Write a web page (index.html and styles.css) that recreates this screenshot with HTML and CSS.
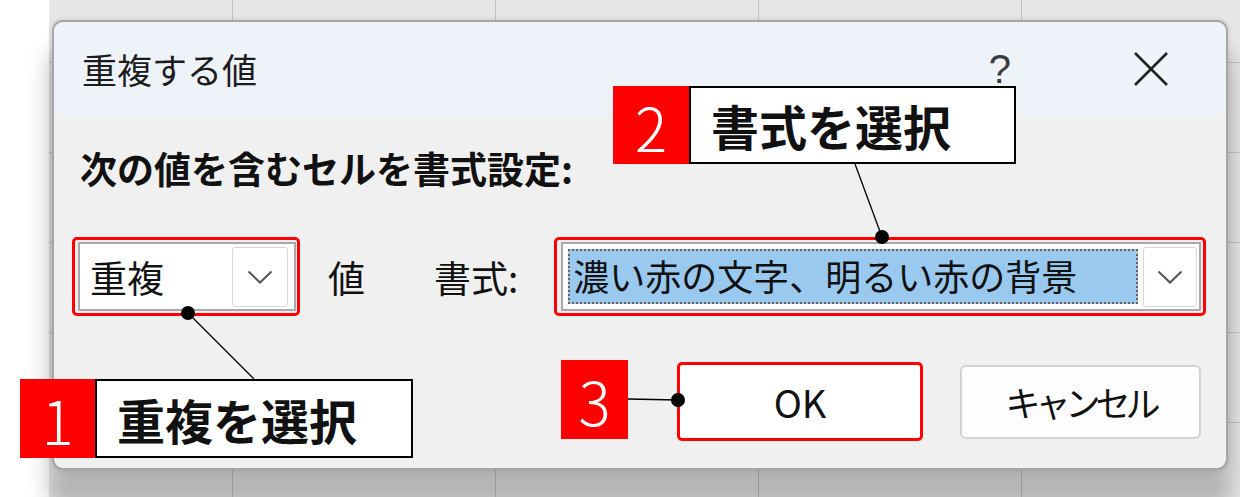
FILE: index.html
```html
<!DOCTYPE html>
<html lang="ja">

<head>
  <meta charset="UTF-8" />
  <title>重複する値</title>
  <link rel="stylesheet" href="styles.css">
</head>

<body>
  <div class="desk">
    <div class="dialog">
      <div class="titlebar">
        <span class="title">重複する値</span>
        <span class="help">?</span>
        <svg class="close" viewBox="0 0 36 36" width="36" height="36">
          <path d="M2 2 L34 34 M34 2 L2 34" stroke="#222" stroke-width="2.6" fill="none" />
        </svg>
      </div>

      <div class="content">
        <p class="prompt">次の値を含むセルを書式設定:</p>

        <div class="row">
          <div class="mark mark-small">
            <div class="combo">
              <span class="combo-text">重複</span>
              <span class="drop">
                <svg viewBox="0 0 26 14" width="26" height="14"><polyline points="1.5,1.5 13,12.5 24.5,1.5" stroke="#555" stroke-width="2" fill="none" /></svg>
              </span>
            </div>
          </div>
          <span class="word">値</span>
          <span class="word word-format">書式:</span>
          <div class="mark mark-wide">
            <div class="combo">
              <span class="combo-sel">濃い赤の文字、明るい赤の背景</span>
              <span class="drop drop-wide">
                <svg viewBox="0 0 26 14" width="26" height="14"><polyline points="1.5,1.5 13,12.5 24.5,1.5" stroke="#555" stroke-width="2" fill="none" /></svg>
              </span>
            </div>
          </div>
        </div>

        <div class="actions">
          <button class="btn btn-ok">OK</button>
          <button class="btn">キャンセル</button>
        </div>
      </div>
    </div>
  </div>

  <!-- 手順の吹き出し -->
  <div class="callout callout-1"><span class="num">1</span><span class="note">重複を選択</span></div>
  <div class="callout callout-2"><span class="num">2</span><span class="note">書式を選択</span></div>
  <div class="callout callout-3"><span class="num">3</span></div>

  <svg class="leaders" width="1240" height="497" viewBox="0 0 1240 497">
    <line x1="188" y1="313" x2="254" y2="379" stroke="#000" stroke-width="1.3" />
    <circle cx="188" cy="313" r="7" fill="#000" />
    <line x1="855" y1="164" x2="882" y2="237" stroke="#000" stroke-width="1.3" />
    <circle cx="882" cy="237" r="7" fill="#000" />
    <line x1="628" y1="399" x2="678" y2="400" stroke="#000" stroke-width="1.3" />
    <circle cx="678" cy="400" r="7" fill="#000" />
  </svg>
</body>

</html>
```

FILE: styles.css
```css
:root {
  --rojo: #ff0000;
  --fuente: "Noto Sans CJK JP", "Noto Sans", sans-serif;
}

* {
  box-sizing: border-box;
}

body {
  margin: 0;
  width: 1240px;
  height: 497px;
  overflow: hidden;
  position: relative;
  background: #fff;
  font-family: var(--fuente);
  color: #111;
}

.desk {
  margin-left: 49px;
  height: 497px;
  padding: 20px 0 0 3px;
  background-color: #e7e7e7;
  background-image:
    linear-gradient(to right, #c2c2c2 1px, transparent 1px),
    linear-gradient(to bottom, #c2c2c2 1px, transparent 1px);
  background-size: 263px 90px;
  background-position: 183px 0, 0 62px;
}

.dialog {
  width: 1176px;
  height: 450px;
  border: 2px solid #a6a6a6;
  border-radius: 11px;
  background: #f0f0f0;
  overflow: hidden;
  box-shadow: 0 34px 22px 4px rgba(0, 0, 0, 0.22), 0 0 6px rgba(0, 0, 0, 0.12);
}

.titlebar {
  height: 93px;
  background: #eef2f9;
  display: flex;
  align-items: center;
  padding: 0 57px 0 28px;
}

.title {
  font-size: 35px;
  color: #1c1c1c;
}

.help {
  margin-left: auto;
  margin-right: 122px;
  font-size: 40px;
  line-height: 1;
  color: #3c3c3c;
  font-family: "Liberation Sans", sans-serif;
}

.close {
  display: block;
}

.content {
  padding: 31px 25px 0 18px;
}

.prompt {
  margin: 0 0 47px 8px;
  font-size: 37px;
  font-weight: bold;
  line-height: 44px;
}

.row {
  display: flex;
  align-items: center;
  height: 79px;
}

.row > * {
  flex-shrink: 0;
  white-space: nowrap;
}

.mark {
  height: 79px;
  border: 3px solid var(--rojo);
  border-radius: 5px;
  display: flex;
  align-items: center;
}

.mark-small {
  width: 228px;
  padding: 0 1px 0 3px;
}

.mark-wide {
  width: 652px;
  padding: 0 2px 0 4px;
}

.combo {
  flex: 1;
  height: 69px;
  border: 2px solid #a9a9a9;
  background: #fff;
  display: flex;
  align-items: center;
}

.combo-text {
  flex: 1;
  padding-left: 10px;
  font-size: 37px;
}

.drop {
  flex-shrink: 0;
  width: 56px;
  height: 60px;
  margin-right: 6px;
  border: 1px solid #d6d6d6;
  border-radius: 3px;
  background: #fff;
  display: flex;
  align-items: center;
  justify-content: center;
}

.drop-wide {
  width: 54px;
  margin-left: 5px;
  margin-right: 2px;
}

.combo-sel {
  flex-shrink: 0;
  width: 570px;
  height: 55px;
  margin-left: 5px;
  padding-left: 3px;
  background: #99c9ef;
  border: 2px dotted #6e5f50;
  font-size: 36px;
  line-height: 49px;
  white-space: nowrap;
}

.word {
  margin-left: 28px;
  font-size: 37px;
}

.word-format {
  margin-left: 69px;
  margin-right: 36px;
}

.actions {
  display: flex;
  justify-content: flex-end;
  align-items: center;
  gap: 37px;
  margin-top: 46px;
}

.btn {
  width: 241px;
  height: 74px;
  border: 2px solid #d3d3d3;
  border-radius: 6px;
  background: #fdfdfd;
  font-family: var(--fuente);
  font-size: 35px;
  letter-spacing: -5px;
  color: #111;
  padding: 0;
}

.btn-ok {
  width: 246px;
  height: 79px;
  border: 3px solid var(--rojo);
  border-radius: 5px;
  background: #fff;
  font-size: 38px;
  letter-spacing: 0;
}

.callout {
  position: absolute;
  display: flex;
  height: 79px;
}

.num {
  width: 75px;
  background: var(--rojo);
  color: #fff;
  font-size: 60px;
  font-weight: 300;
  display: flex;
  align-items: center;
  justify-content: center;
}

.note {
  background: #fff;
  border: 2px solid #000;
  font-size: 48px;
  font-weight: bold;
  display: flex;
  align-items: center;
  padding-left: 20px;
}

.callout-1 {
  left: 20px;
  top: 379px;
}

.callout-1 .note {
  width: 318px;
}

.callout-2 {
  left: 613px;
  top: 86px;
  height: 78px;
}

.callout-2 .num {
  width: 76px;
}

.callout-2 .note {
  width: 327px;
}

.callout-3 {
  left: 561px;
  top: 360px;
}

.callout-3 .num {
  width: 67px;
}

.leaders {
  position: absolute;
  left: 0;
  top: 0;
  pointer-events: none;
}
```
